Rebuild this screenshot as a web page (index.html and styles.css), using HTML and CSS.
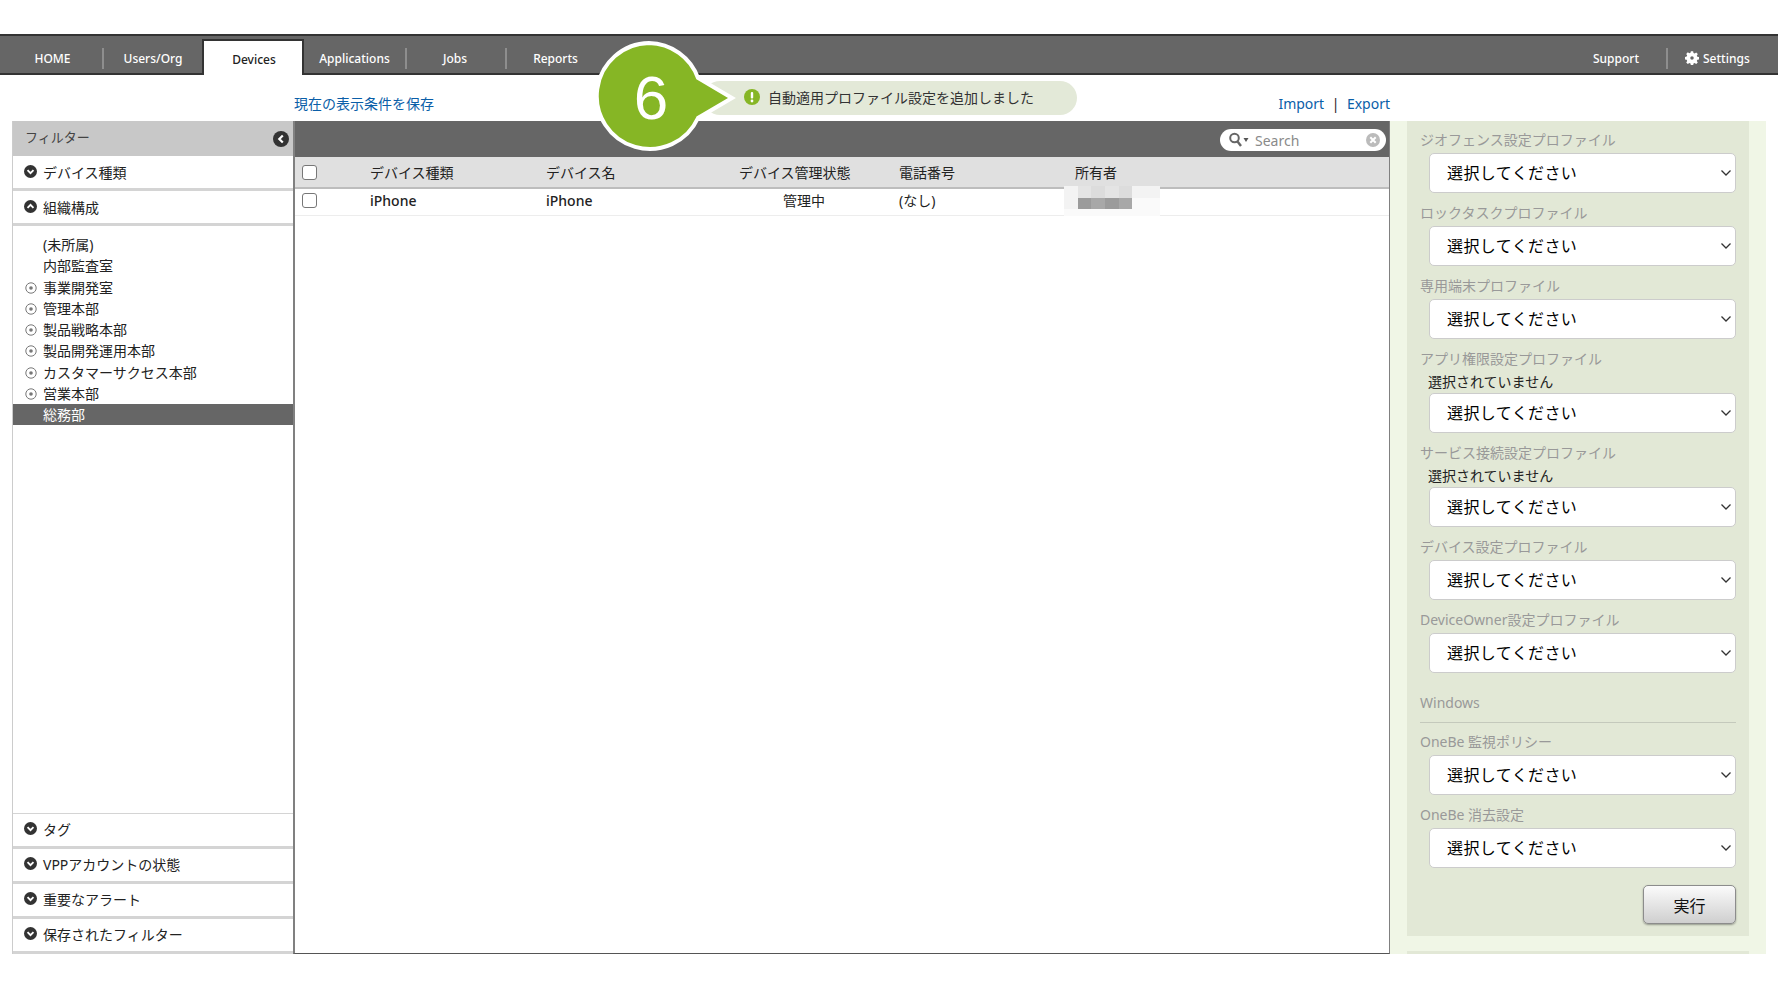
FILE: index.html
```html
<!DOCTYPE html>
<html lang="ja">
<head>
<meta charset="utf-8">
<title>Devices</title>
<link rel="stylesheet" href="styles.css">
</head>
<body>
<div class="page">
  <nav class="nav">
    <div class="nav-left">
      <a class="tab tab-sep home">HOME</a>
      <a class="tab w98">Users/Org</a>
      <a class="tab active">Devices</a>
      <a class="tab tab-sep w103">Applications</a>
      <a class="tab tab-sep w100 jobs">Jobs</a>
      <a class="tab w99 reports">Reports</a>
    </div>
    <div class="nav-right">
      <a class="tab tab-sep w104 support">Support</a>
      <a class="tab settings">
        <svg class="gear" viewBox="0 0 16 16"><path fill="#fff" fill-rule="evenodd" d="M6.700.200h2.600l.4 2 1.300.6 1.800-1.100 1.800 1.800-1.100 1.800.6 1.300 2 .4v2.600l-2 .4-.6 1.300 1.100 1.800-1.800 1.800-1.800-1.100-1.300.6-.4 2H6.700l-.4-2-1.300-.6-1.800 1.100-1.800-1.800 1.100-1.800-.6-1.300-2-.4V6.800l2-.4.6-1.300-1.100-1.800 1.800-1.800 1.800 1.100 1.300-.6zM8 6a2 2 0 1 0 0 4 2 2 0 0 0 0-4z"/></svg>
        Settings
      </a>
    </div>
  </nav>

  <div class="subbar">
    <a class="link">現在の表示条件を保存</a>
    <div class="io"><a class="link">Import</a><span class="pipe">|</span><a class="link">Export</a></div>
  </div>

  <div class="callout">
    <div class="toast">
      <svg class="toast-icon" viewBox="0 0 16 16"><circle cx="8" cy="8" r="8" fill="#86b625"/><rect x="6.800" y="3" width="2.400" height="6.600" rx="1" fill="#fff"/><circle cx="8" cy="12" r="1.400" fill="#fff"/></svg>
      <span>自動適用プロファイル設定を追加しました</span>
    </div>
    <svg class="badge-shape" viewBox="0 0 140 116">
      <path d="M53 3a53 53 0 0 1 49 35l34 20-34 20A53 53 0 1 1 53 3z" fill="#86b625" stroke="#fff" stroke-width="4"/>
    </svg>
    <span class="badge-num">6</span>
  </div>

  <div class="workspace">
    <aside class="filters">
      <div class="filter-head">
        <span>フィルター</span>
        <svg class="ico16" viewBox="0 0 16 16"><circle cx="8" cy="8" r="8" fill="#333"/><path d="M9.800 4.500 6.300 8l3.500 3.500" fill="none" stroke="#fff" stroke-width="2.200"/></svg>
      </div>
      <div class="acc"><svg class="ico13" viewBox="0 0 14 14"><circle cx="7" cy="7" r="7" fill="#333"/><path d="M3.800 5.500 7 8.700l3.200-3.200" fill="none" stroke="#fff" stroke-width="2"/></svg>デバイス種類</div>
      <div class="acc"><svg class="ico13" viewBox="0 0 14 14"><circle cx="7" cy="7" r="7" fill="#333"/><path d="M3.800 8.500 7 5.300l3.200 3.200" fill="none" stroke="#fff" stroke-width="2"/></svg>組織構成</div>
      <ul class="tree">
        <li class="node">(未所属)</li>
        <li class="node">内部監査室</li>
        <li class="node"><svg class="dot" viewBox="0 0 12 12"><circle cx="6" cy="6" r="5.200" fill="none" stroke="#777"/><circle cx="6" cy="6" r="1.800" fill="#777"/></svg>事業開発室</li>
        <li class="node"><svg class="dot" viewBox="0 0 12 12"><circle cx="6" cy="6" r="5.200" fill="none" stroke="#777"/><circle cx="6" cy="6" r="1.800" fill="#777"/></svg>管理本部</li>
        <li class="node"><svg class="dot" viewBox="0 0 12 12"><circle cx="6" cy="6" r="5.200" fill="none" stroke="#777"/><circle cx="6" cy="6" r="1.800" fill="#777"/></svg>製品戦略本部</li>
        <li class="node"><svg class="dot" viewBox="0 0 12 12"><circle cx="6" cy="6" r="5.200" fill="none" stroke="#777"/><circle cx="6" cy="6" r="1.800" fill="#777"/></svg>製品開発運用本部</li>
        <li class="node"><svg class="dot" viewBox="0 0 12 12"><circle cx="6" cy="6" r="5.200" fill="none" stroke="#777"/><circle cx="6" cy="6" r="1.800" fill="#777"/></svg>カスタマーサクセス本部</li>
        <li class="node"><svg class="dot" viewBox="0 0 12 12"><circle cx="6" cy="6" r="5.200" fill="none" stroke="#777"/><circle cx="6" cy="6" r="1.800" fill="#777"/></svg>営業本部</li>
        <li class="node selected">総務部</li>
      </ul>
      <div class="acc low"><svg class="ico13" viewBox="0 0 14 14"><circle cx="7" cy="7" r="7" fill="#333"/><path d="M3.800 5.500 7 8.700l3.200-3.200" fill="none" stroke="#fff" stroke-width="2"/></svg>タグ</div>
      <div class="acc low"><svg class="ico13" viewBox="0 0 14 14"><circle cx="7" cy="7" r="7" fill="#333"/><path d="M3.800 5.500 7 8.700l3.200-3.200" fill="none" stroke="#fff" stroke-width="2"/></svg>VPPアカウントの状態</div>
      <div class="acc low"><svg class="ico13" viewBox="0 0 14 14"><circle cx="7" cy="7" r="7" fill="#333"/><path d="M3.800 5.500 7 8.700l3.200-3.200" fill="none" stroke="#fff" stroke-width="2"/></svg>重要なアラート</div>
      <div class="acc low"><svg class="ico13" viewBox="0 0 14 14"><circle cx="7" cy="7" r="7" fill="#333"/><path d="M3.800 5.500 7 8.700l3.200-3.200" fill="none" stroke="#fff" stroke-width="2"/></svg>保存されたフィルター</div>
    </aside>

    <main class="main">
      <div class="toolbar">
        <div class="search">
          <svg class="mag" viewBox="0 0 22 16"><circle cx="6.500" cy="6" r="4.300" fill="none" stroke="#666" stroke-width="2"/><path d="M9.500 9.500 13 14" stroke="#666" stroke-width="2.400"/><path d="M15.500 6h5L18 10z" fill="#555"/></svg>
          <span class="search-text">Search</span>
          <svg class="clear" viewBox="0 0 14 14"><circle cx="7" cy="7" r="7" fill="#bbb"/><path d="m4.300 4.300 5.400 5.400m0-5.400-5.400 5.400" stroke="#fff" stroke-width="2"/></svg>
        </div>
      </div>
      <table class="grid">
        <colgroup><col class="c1"><col class="c2"><col class="c3"><col class="c4"><col class="c5"><col></colgroup>
        <thead>
          <tr>
            <th><input class="check" type="checkbox"></th>
            <th>デバイス種類</th><th>デバイス名</th><th>デバイス管理状態</th><th>電話番号</th><th>所有者</th>
          </tr>
        </thead>
        <tbody>
          <tr>
            <td><input class="check" type="checkbox"></td>
            <td class="latin">iPhone</td><td class="latin">iPhone</td><td class="state">管理中</td><td>(なし)</td>
            <td class="owner">
              <div class="mosaic">
                <i class="m1"></i><i class="m2"></i><i class="m3"></i><i class="m2"></i><i class="m3"></i><i class="m1"></i><i class="m1"></i>
                <i class="m1"></i><i class="m4"></i><i class="m5"></i><i class="m4"></i><i class="m5"></i><i class="m0"></i><i class="m0"></i>
                <i class="m0"></i><i class="m0"></i><i class="m0"></i><i class="m0"></i><i class="m0"></i><i class="m0"></i><i class="m0"></i>
              </div>
            </td>
          </tr>
        </tbody>
      </table>
    </main>

    <aside class="side">
      <form class="side-card">
        <div class="field"><label class="lbl">ジオフェンス設定プロファイル</label><select class="sel"><option>選択してください</option></select></div>
        <div class="field"><label class="lbl">ロックタスクプロファイル</label><select class="sel"><option>選択してください</option></select></div>
        <div class="field"><label class="lbl">専用端末プロファイル</label><select class="sel"><option>選択してください</option></select></div>
        <div class="field"><label class="lbl">アプリ権限設定プロファイル</label><p class="none">選択されていません</p><select class="sel"><option>選択してください</option></select></div>
        <div class="field"><label class="lbl">サービス接続設定プロファイル</label><p class="none">選択されていません</p><select class="sel"><option>選択してください</option></select></div>
        <div class="field"><label class="lbl">デバイス設定プロファイル</label><select class="sel"><option>選択してください</option></select></div>
        <div class="field"><label class="lbl">DeviceOwner設定プロファイル</label><select class="sel"><option>選択してください</option></select></div>
        <div class="os">Windows</div>
        <div class="field"><label class="lbl">OneBe 監視ポリシー</label><select class="sel"><option>選択してください</option></select></div>
        <div class="field"><label class="lbl">OneBe 消去設定</label><select class="sel"><option>選択してください</option></select></div>
        <div class="actions"><button class="run" type="button">実行</button></div>
      </form>
      <div class="side-rest"></div>
    </aside>
  </div>
</div>
</body>
</html>
```

FILE: styles.css
```css
* { box-sizing: border-box; }
html, body { margin: 0; padding: 0; background: #fff; }
body { font-family: "Noto Sans", "Noto Sans CJK JP", sans-serif; font-size: 14px; color: #222; }
.page { position: relative; width: 1778px; height: 1000px; padding-top: 34px; overflow: hidden; }

/* nav */
.nav { display: flex; justify-content: space-between; align-items: center; height: 41px; background: #666; border-top: 2px solid #333; border-bottom: 2px solid #333; }
.nav-left, .nav-right { display: flex; align-items: center; height: 100%; }
.tab { display: flex; align-items: center; justify-content: center; height: 21px; color: #fff; font-size: 12px; font-weight: 500; margin-top: 7px; }
.tab-sep { border-right: 2px solid #8e8e8e; }
.home { width: 104px; padding-left: 3px; }
.w98 { width: 98px; }
.w100 { width: 100px; }
.w103 { width: 103px; }
.w99 { width: 99px; }
.w104 { width: 104px; }
.jobs { padding-right: 2px; }
.reports { padding-right: 2px; }
.support { padding-left: 2px; }
.tab.active { width: 102px; height: 36px; margin-top: 0; align-self: flex-end; margin-bottom: -2px; padding: 3px 0 0 2px; background: #fff; color: #222; border: 2px solid #333; border-bottom: 0; }
.settings { width: 110px; justify-content: flex-start; padding-left: 17px; gap: 4px; }
.gear { width: 14px; height: 14px; }

/* sub bar */
.subbar { display: flex; justify-content: space-between; align-items: center; height: 46px; padding: 10px 388px 0 294px; }
.link { color: #0a5ea8; font-size: 14px; }
.io { display: flex; align-items: center; }
.pipe { margin: 0 7.500px; color: #222; }

/* callout */
.callout { position: absolute; left: 596px; top: 40px; width: 490px; height: 116px; }
.toast { position: absolute; left: 107px; top: 41px; width: 374px; height: 34px; display: flex; align-items: center; gap: 8px; padding: 0 0 3px 41px; background: #e3e9d8; border-radius: 17px; font-size: 14px; color: #333; }
.toast-icon { width: 16px; height: 16px; flex: none; }
.badge-shape { position: absolute; left: 0; top: 0; width: 140px; height: 116px; }
.badge-num { position: absolute; left: 35px; top: 14px; width: 40px; text-align: center; color: #fff; font-size: 62px; line-height: 88px; font-family: "Liberation Sans", sans-serif; }

/* workspace */
.workspace { display: flex; height: 833px; padding-left: 12px; }
.filters { display: flex; flex-direction: column; width: 281px; border-left: 1px solid #ccc; }
.filter-head { display: flex; justify-content: space-between; align-items: center; height: 35px; padding: 0 4px 4px 12px; background: #c8c8c8; color: #444; font-size: 13px; }
.ico16 { width: 16px; height: 16px; flex: none; margin-top: 5px; }
.acc { display: flex; align-items: center; gap: 6px; height: 35px; padding-left: 11px; padding-bottom: 1px; border-bottom: 3px solid #d4d4d4; font-size: 14px; color: #222; background: #fff; }
.low { padding-bottom: 3px; }
.ico13 { width: 13px; height: 13px; flex: none; }
.tree { flex: 1; list-style: none; margin: 0; padding: 8px 0 0; }
.node { position: relative; height: 21.250px; line-height: 21px; padding-left: 30px; font-size: 14px; color: #222; }
.dot { position: absolute; left: 12px; top: 5px; width: 12px; height: 12px; }
.selected { background: #666; color: #fff; }
.tree + .acc { border-top: 1px solid #d4d4d4; height: 36px; }

/* main */
.main { width: 1097px; border-left: 2px solid #808080; border-right: 1px solid #808080; border-bottom: 1px solid #555; }
.toolbar { display: flex; align-items: center; justify-content: flex-end; height: 36px; padding: 2px 3px 0 0; background: #666; }
.search { display: flex; align-items: center; width: 166px; height: 22px; padding: 0 6px 0 8px; background: #fff; border-radius: 11px; }
.mag { width: 22px; height: 16px; flex: none; }
.search-text { flex: 1; margin-left: 5px; color: #8a8a8a; font-size: 14px; }
.clear { width: 14px; height: 14px; flex: none; }
.grid { width: 100%; table-layout: fixed; border-collapse: collapse; font-size: 14px; }
.c1 { width: 75px; }
.c2 { width: 176px; }
.c3 { width: 193px; }
.c4 { width: 160px; }
.c5 { width: 176px; }
th { height: 31px; padding: 0; font-weight: 400; text-align: left; background: #e0e0e0; border-bottom: 2px solid #bdbdbd; }
td { height: 27px; padding: 0 0 2px; border-bottom: 1px solid #ededed; line-height: 20px; }
.latin { font-weight: 500; }
th:first-child, td:first-child { padding-left: 7px; }
.check { display: block; width: 15px; height: 15px; margin: 0; appearance: none; background: #fff; border: 1px solid #777; border-radius: 3px; }
.state { padding-left: 44px; }
.owner { position: relative; padding: 0; }
.mosaic { position: absolute; left: -11px; top: -3px; display: grid; grid-template-columns: repeat(7, 13.700px); grid-template-rows: 12px 11px 7px; }
.m0 { background: #fafafa; }
.m1 { background: #f3f3f3; }
.m2 { background: #e4e4e4; }
.m3 { background: #dcdcdc; }
.m4 { background: #9b9b9b; }
.m5 { background: #a8a8a8; }

/* side */
.side { display: flex; flex-direction: column; gap: 15px; width: 376px; padding: 0 17px; background: #f0f6e6; }
.side-card { height: 815px; padding: 8px 13px 0; background: #e2e8d6; }
.side-rest { flex: 1; background: #e2e8d6; }
.field { margin-bottom: 0; }
.lbl { display: block; height: 24px; padding-top: 1px; color: #999; font-size: 14px; line-height: 20px; }
.none { margin: 1px 0 0 8px; height: 20px; font-size: 14px; line-height: 18px; color: #222; }
.sel { display: block; width: 307px; height: 40px; margin: 0 0 9px 9px; padding: 0 8px 0 17px; font: inherit; font-size: 16px; letter-spacing: .4px; color: #000; appearance: none; background: #fff url("data:image/svg+xml,%3Csvg xmlns='http://www.w3.org/2000/svg' width='12' height='8'%3E%3Cpath d='M1.500 1.500 6 6l4.500-4.500' fill='none' stroke='%23333' stroke-width='1.300'/%3E%3C/svg%3E") no-repeat right 3px center; border: 1px solid #ccc; border-radius: 5px; }
.os { height: 35px; margin-top: 15px; padding-top: 5px; margin-bottom: 8px; border-bottom: 1px solid #c4c9bc; color: #999; font-size: 14px; line-height: 20px; width: 316px; }
.actions { display: flex; justify-content: flex-end; padding-top: 8px; }
.run { width: 93px; height: 39px; padding: 0; font: inherit; font-size: 16px; color: #111; background: linear-gradient(#fbfbfb, #cfcfcf); border: 1px solid #8c8c8c; border-radius: 5px; box-shadow: 0 1px 2px rgba(0,0,0,.35); }
```
